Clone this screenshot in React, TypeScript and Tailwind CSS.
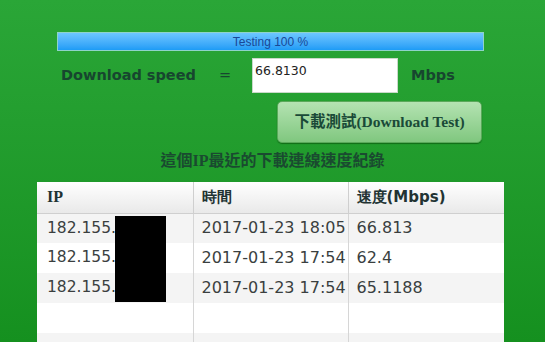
import React from "react";

const ROWS = [
  { ip: "182.155.", time: "2017-01-23 18:05", speed: "66.813" },
  { ip: "182.155.", time: "2017-01-23 17:54", speed: "62.4" },
  { ip: "182.155.", time: "2017-01-23 17:54", speed: "65.1188" },
  { ip: "", time: "", speed: "" },
  { ip: "", time: "", speed: "" },
];

const sans = "font-['DejaVu_Sans',Verdana,sans-serif]";
const serif = "font-['Liberation_Serif','Noto_Sans_CJK_TC',serif]";

export default function App() {
  return (
    <div className="h-[342px] w-full overflow-hidden bg-gradient-to-b from-[#2aa637] to-[#15901f]">
      {/* progress */}
      <div className="pt-[32px] pl-[57px]">
        <div className="flex h-[19px] w-[427px] items-center justify-center border border-[#8fd3c8] bg-gradient-to-b from-[#6cc6ff] to-[#1c9cf6] font-['Liberation_Sans',Arial,sans-serif] text-[12px] text-[#1a4896]">
          Testing 100 %
        </div>
      </div>

      {/* speed row */}
      <div className={`mt-[7px] flex h-[35px] items-center pl-[61px] text-[14.5px] font-bold text-[#17462f] ${sans}`}>
        <span className="w-[158px]">Download speed</span>
        <span className="w-[33px] font-normal">=</span>
        <div className="h-[35px] w-[146px] self-start border border-[#c9d9c9] bg-white pl-[2px] pt-[3px] text-[12.5px] font-normal text-[#222]">
          66.8130
        </div>
        <span className="ml-[13px]">Mbps</span>
      </div>

      {/* button */}
      <div className="mt-[8px] pl-[277px]">
        <button
          className={`flex h-[42px] w-[205px] items-center justify-center rounded-[5px] border border-[#5aa95a] bg-gradient-to-b from-[#b4e3b2] to-[#80c77f] text-[15.5px] font-bold text-[#1a4a38] shadow-[0_1px_1px_rgba(0,60,0,0.5)] ${serif}`}
        >
          下載測試(Download Test)
        </button>
      </div>

      {/* title */}
      <div className={`mt-[7px] text-center text-[16px] leading-[22px] font-bold text-[#1a4a30] ${serif}`}>
        這個IP最近的下載連線速度紀錄
      </div>

      {/* history table */}
      <div className="relative mt-[10px] ml-[37px] w-[467px]">
        <table className={`w-full table-fixed border-collapse bg-white text-[16px] text-[#3a3f3f] ${sans}`}>
          <colgroup>
            <col className="w-[156px]" />
            <col className="w-[155px]" />
            <col className="w-[156px]" />
          </colgroup>
          <thead>
            <tr className="h-[31px] bg-gradient-to-b from-white to-[#e9e9e9] text-left text-[15px] font-bold text-[#223333]">
              <th className={`border-r border-b border-[#cfcfcf] pl-[10px] text-[16px] ${serif}`}>IP</th>
              <th className="border-r border-b border-[#cfcfcf] pl-[8px]">時間</th>
              <th className="border-b border-[#cfcfcf] pl-[8px]">速度(Mbps)</th>
            </tr>
          </thead>
          <tbody>
            {ROWS.map((r, i) => (
              <tr key={i} className={i % 2 === 0 ? "h-[30px] bg-[#f4f4f4]" : "h-[30px] bg-white"}>
                <td className="border-r border-[#d6d6d6] pl-[10px] text-[15.5px]">{r.ip}</td>
                <td className="border-r border-[#d6d6d6] pl-[8px] whitespace-nowrap">{r.time}</td>
                <td className="pl-[8px]">{r.speed}</td>
              </tr>
            ))}
          </tbody>
        </table>
        {/* redaction box */}
        <div className="absolute top-[34px] left-[78px] h-[86px] w-[51px] bg-black" />
      </div>
    </div>
  );
}
